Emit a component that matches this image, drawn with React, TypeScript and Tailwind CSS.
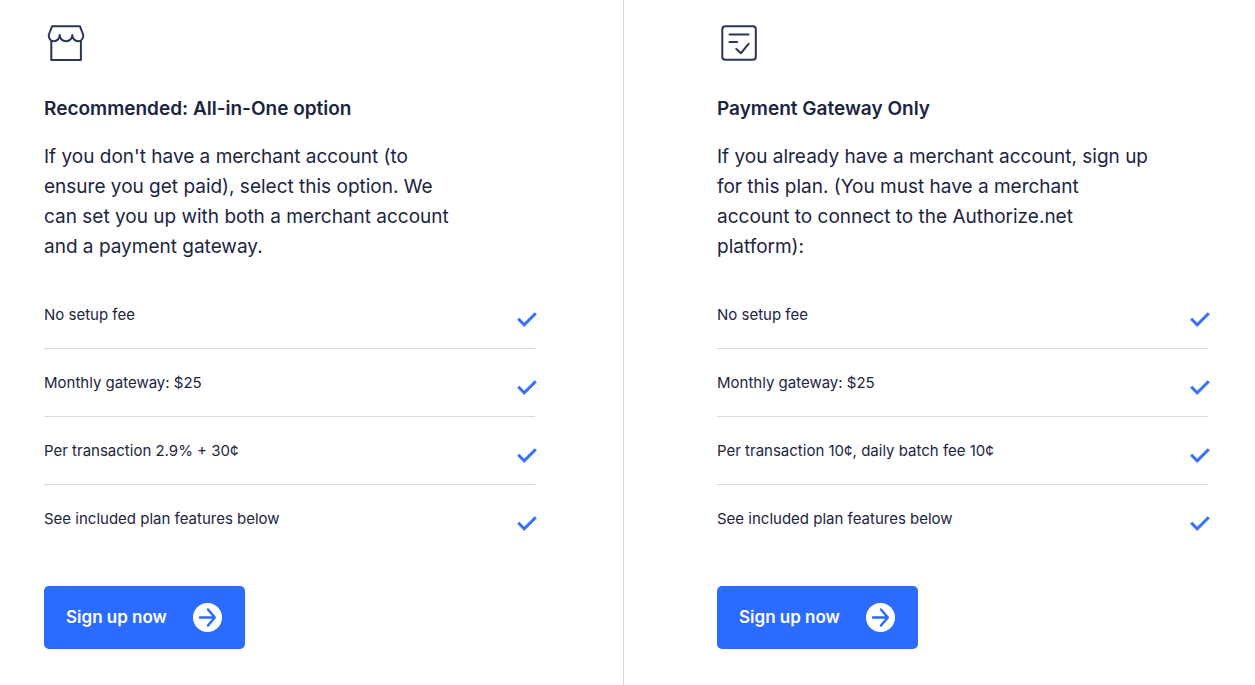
import type { ReactNode } from 'react';

function StoreIcon() {
  return (
    <svg viewBox="0 0 44 44" className="size-11" fill="none" stroke="#2b3553" strokeWidth="2" strokeLinejoin="round" aria-hidden="true">
      <path d="M8 4.300h28l3.300 8.700c0 3.600-2 6.300-5.100 6.300-3.200 0-5.900-2.600-5.900-6.300 0 3.700-2.800 6.300-6.300 6.300s-6.300-2.600-6.300-6.300c0 3.700-2.700 6.300-5.900 6.300-3.100 0-5.100-2.700-5.100-6.300z" />
      <path d="M7.300 18.500V38h29.600V18.500" />
    </svg>
  );
}

function ChecklistIcon() {
  return (
    <svg viewBox="0 0 44 44" className="size-11" fill="none" stroke="#2b3553" strokeWidth="2" strokeLinecap="round" strokeLinejoin="round" aria-hidden="true">
      <rect x="5.300" y="4.300" width="33.500" height="33.500" rx="3" />
      <path d="M12.500 12.500h19M12.500 20h7.700M19.300 27l4.700 4.200 7.600-9.400" />
    </svg>
  );
}

function Check() {
  return (
    <svg viewBox="0 0 20 16" className="-mr-0.5 mt-2 h-4 w-5 shrink-0" fill="none" stroke="#3872fa" strokeWidth="3" aria-hidden="true">
      <path d="M1.200 7.800l6 6L18.800 2.200" />
    </svg>
  );
}

type PlanProps = { icon: ReactNode; title: string; text: string; textWidth: string; items: string[]; className: string };

function Plan({ icon, title, text, textWidth, items, className }: PlanProps) {
  return (
    <section className={`pt-[22px] pb-9 ${className}`}>
      {icon}
      <h2 className="mt-7 text-[19px] leading-[30px] font-semibold">{title}</h2>
      <p className={`mt-[18px] text-[19px] leading-[30px] font-normal ${textWidth}`}>{text}</p>
      <ul className="mt-[19px]">
        {items.map((item) => (
          <li key={item} className="flex h-[68px] items-center justify-between border-b border-[#d9d9d9] text-[15px] leading-6 font-normal last:border-b-0">
            {item}
            <Check />
          </li>
        ))}
      </ul>
      <a href="#signup" className="mt-[33px] inline-flex h-[63px] items-center gap-[26px] rounded-[5px] bg-[#2b6bff] pr-[23px] pl-[22px] text-[17px] font-semibold text-white">
        Sign up now
        <svg viewBox="0 0 29 29" className="size-[29px]" fill="none" aria-hidden="true">
          <circle cx="14.500" cy="14.500" r="14.500" fill="white" />
          <path d="M7 14.500H21.500M15 6.500L21.800 14.500l-6.800 8" stroke="#2b6bff" strokeWidth="2.500" strokeLinecap="round" strokeLinejoin="round" />
        </svg>
      </a>
    </section>
  );
}

export default function App() {
  return (
    <main className="grid min-h-screen grid-cols-[624fr_631fr] bg-white font-['Inter',sans-serif] text-[#1c2540]">
      <Plan
        className="border-r border-[#d9d9d9] pr-[88px] pl-11"
        icon={<StoreIcon />}
        title="Recommended: All-in-One option"
        text="If you don't have a merchant account (to ensure you get paid), select this option. We can set you up with both a merchant account and a payment gateway."
        textWidth="max-w-[424px]"
        items={['No setup fee', 'Monthly gateway: $25', 'Per transaction 2.9% + 30¢', 'See included plan features below']}
      />
      <Plan
        className="pr-[47px] pl-[93px]"
        icon={<ChecklistIcon />}
        title="Payment Gateway Only"
        text="If you already have a merchant account, sign up for this plan. (You must have a merchant account to connect to the Authorize.net platform):"
        textWidth="max-w-[436px]"
        items={['No setup fee', 'Monthly gateway: $25', 'Per transaction 10¢, daily batch fee 10¢', 'See included plan features below']}
      />
    </main>
  );
}
